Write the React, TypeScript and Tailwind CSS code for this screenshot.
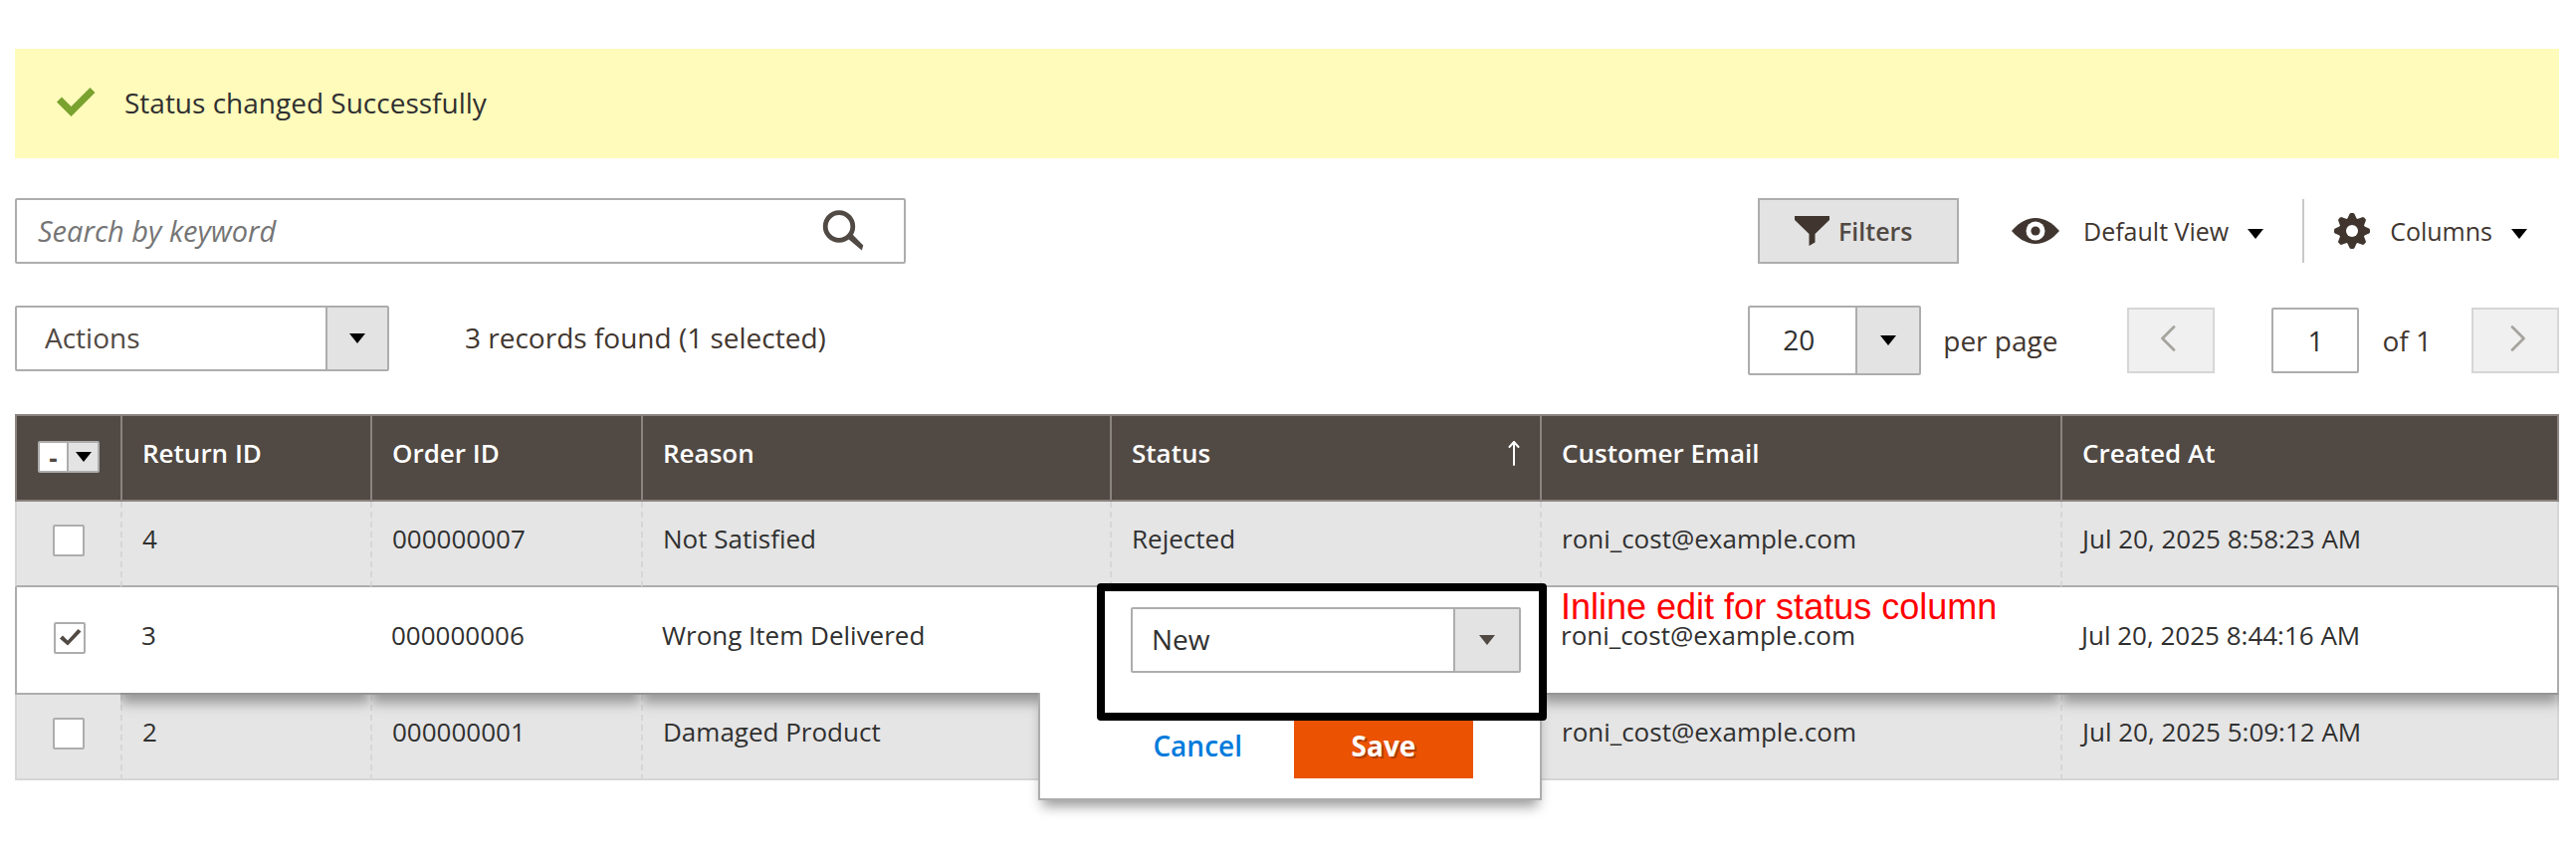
import React, { useState } from 'react';

type ReturnRow = {
  id: string;
  order: string;
  reason: string;
  status?: string;
  email: string;
  created: string;
  selected?: boolean;
};

const rows: ReturnRow[] = [
  { id: '4', order: '000000007', reason: 'Not Satisfied', status: 'Rejected', email: 'roni_cost@example.com', created: 'Jul 20, 2025 8:58:23 AM' },
  { id: '3', order: '000000006', reason: 'Wrong Item Delivered', status: 'New', email: 'roni_cost@example.com', created: 'Jul 20, 2025 8:44:16 AM', selected: true },
  { id: '2', order: '000000001', reason: 'Damaged Product', email: 'roni_cost@example.com', created: 'Jul 20, 2025 5:09:12 AM' },
];

function Caret({ className = 'text-black' }: { className?: string }) {
  return (
    <svg aria-hidden="true" width="16" height="10" viewBox="0 0 16 10" className={`shrink-0 ${className}`}>
      <path d="M0 0h16L8 10z" fill="currentColor" />
    </svg>
  );
}

function CheckIcon() {
  return (
    <svg aria-hidden="true" width="40" height="30" viewBox="0 0 40 30" className="shrink-0 text-[#79a22e]">
      <path d="M1 14.500l5-5L15.500 19 34.500 0 39.500 5 15.500 29z" fill="currentColor" />
    </svg>
  );
}

function SearchIcon() {
  return (
    <svg aria-hidden="true" width="42" height="42" viewBox="0 0 42 42" className="text-[#514943]">
      <circle cx="17" cy="16.500" r="13.800" fill="none" stroke="currentColor" strokeWidth="4.800" />
      <path d="M25.500 28.500l4.500-4.500L41.300 35.500 39.800 40.500z" fill="currentColor" />
    </svg>
  );
}

function FunnelIcon() {
  return (
    <svg aria-hidden="true" width="36" height="30" viewBox="0 0 36 30" className="shrink-0 text-[#41362f]">
      <path d="M0 0h35v4L20.500 18v8.500L14.500 30V18L0 4z" fill="currentColor" />
    </svg>
  );
}

function EyeIcon() {
  return (
    <svg aria-hidden="true" width="48" height="26" viewBox="0 0 48 26" className="shrink-0 text-[#41362f]">
      <path d="M0 13C7 5 15 0 24 0s17 5 24 13c-7 8-15 13-24 13S7 21 0 13z" fill="currentColor" />
      <circle cx="24" cy="13" r="9.500" fill="#fff" />
      <circle cx="24" cy="13" r="4.600" fill="currentColor" />
    </svg>
  );
}

function GearIcon() {
  return (
    <svg aria-hidden="true" width="36" height="36" viewBox="0 0 36 36" className="shrink-0 text-[#41362f]">
      <g fill="currentColor">
        <circle cx="18" cy="18" r="13.200" />
        {[0, 45, 90, 135, 180, 225, 270, 315].map((angle) => (
          <path key={angle} d="M13 6.500L15.500 1Q16 0 17 0h2Q20 0 20.500 1L23 6.500z" transform={`rotate(${angle} 18 18)`} />
        ))}
      </g>
      <circle cx="18" cy="18" r="6" fill="#fff" />
    </svg>
  );
}

function Chevron({ flip = false }: { flip?: boolean }) {
  return (
    <svg aria-hidden="true" width="16" height="26" viewBox="0 0 16 26" className={flip ? 'rotate-180' : ''}>
      <path d="M14 1.500L2.500 13 14 24.500" fill="none" stroke="#a6a49e" strokeWidth="2.800" strokeLinecap="round" strokeLinejoin="round" />
    </svg>
  );
}

type PickerProps = {
  label: string;
  options: string[];
  className: string;
  selectClassName: string;
  arrowClassName: string;
  caretClassName?: string;
};

function Picker({ label, options, className, selectClassName, arrowClassName, caretClassName }: PickerProps) {
  return (
    <div className={`relative flex rounded-xs border-2 border-[#adadad] bg-white ${className}`}>
      <select aria-label={label} className={`w-full appearance-none bg-transparent pb-[2px] text-[28px] outline-none ${selectClassName}`}>
        {options.map((option) => (
          <option key={option}>{option}</option>
        ))}
      </select>
      <span className={`pointer-events-none absolute inset-y-0 right-0 flex items-center justify-center border-l-2 border-[#adadad] bg-[#e3e3e3] ${arrowClassName}`}>
        <Caret className={caretClassName} />
      </span>
    </div>
  );
}

function RowCheckbox({ id, initial }: { id: string; initial: boolean }) {
  const [checked, setChecked] = useState(initial);
  return (
    <label className="relative block size-8">
      <input
        type="checkbox"
        aria-label={`Select return ${id}`}
        checked={checked}
        onChange={() => setChecked(!checked)}
        className="block size-8 appearance-none rounded-xs border-2 border-[#adadad] bg-white"
      />
      {checked && (
        <svg aria-hidden="true" viewBox="0 0 32 32" className="pointer-events-none absolute inset-0 size-8 text-[#514943]">
          <path d="M6 16.500l3-3 5 5L24.500 7l3 2.500L14 23.500z" fill="currentColor" />
        </svg>
      )}
    </label>
  );
}

function StatusEditor() {
  return (
    <>
      <Picker
        label="Status"
        options={['New', 'Pending', 'Approved', 'Rejected']}
        className="h-[66px]"
        selectClassName="pl-[19px] text-[#303030]"
        arrowClassName="w-[66px]"
        caretClassName="text-[#514943]"
      />
      <div className="absolute top-full -right-[2px] z-10 -mt-[2px] flex w-[506px] items-center border-2 border-t-0 border-[#adadad] bg-white py-5 pr-[67px] shadow-[0_10px_12px_-4px_rgba(0,0,0,0.4)]">
        <button type="button" className="ml-auto px-2 text-[28px] leading-[38px] font-semibold text-[#007bdb]">Cancel</button>
        <button type="button" className="ml-[44px] h-[66px] w-[180px] bg-[#eb5202] text-[28px] leading-[38px] font-bold text-white [text-shadow:2px_2px_0_rgba(0,0,0,0.25)]">
          Save
        </button>
      </div>
      <div className="pointer-events-none absolute -top-1 -right-[7px] -left-[13px] z-20 h-[138px] rounded border-8 border-black" />
    </>
  );
}

const thClass = 'h-[88px] border-y-2 border-l-2 border-[#8a837f] bg-[#514943] pt-[19px] pl-5 text-left align-top font-semibold text-white last:border-r-2';
const plainCell = 'h-[86px] border-b-2 border-l-2 border-b-[#d6d6d6] border-l-[#d6d6d6] [border-left-style:dashed] bg-[#e5e5e5] pt-[19px] pl-5 align-top last:border-r-2 last:border-r-[#d6d6d6]';
const editCell = 'relative h-[108px] border-b-2 border-b-[#959595] bg-white pt-[30px] pl-[21px] align-top shadow-[0_8px_12px_0_rgba(0,0,0,0.35)] [clip-path:inset(0_0_-30px_0)] last:border-r-2 last:border-r-[#adadad]';

function GridRow({ row, beforeEdited }: { row: ReturnRow; beforeEdited: boolean }) {
  if (row.selected) {
    return (
      <tr className="relative z-10">
        <td className="h-[108px] border-b-2 border-l-2 border-[#adadad] bg-white pt-[35px] pl-[37px] align-top">
          <RowCheckbox id={row.id} initial />
        </td>
        <td className={editCell}>{row.id}</td>
        <td className={editCell}>{row.order}</td>
        <td className={editCell}>{row.reason}</td>
        <td className="relative z-10 h-[108px] bg-white py-5 pr-[19px] pl-[21px] align-top">
          <StatusEditor />
        </td>
        <td className={editCell}>
          <span className="absolute top-0 left-[21px] font-['Liberation_Sans',Arial,sans-serif] text-[36px] leading-[40px] whitespace-nowrap text-[#ff0000]">
            Inline edit for status column
          </span>
          <span className="relative">{row.email}</span>
        </td>
        <td className={editCell}>{row.created}</td>
      </tr>
    );
  }
  const cell = beforeEdited ? `${plainCell} border-b-[#adadad]!` : plainCell;
  return (
    <tr>
      <td className={`h-[86px] border-b-2 border-l-2 border-[#d6d6d6] bg-[#e5e5e5] pt-[23px] pl-[36px] align-top ${beforeEdited ? 'border-b-[#adadad]!' : ''}`}>
        <RowCheckbox id={row.id} initial={false} />
      </td>
      <td className={cell}>{row.id}</td>
      <td className={cell}>{row.order}</td>
      <td className={cell}>{row.reason}</td>
      <td className={cell}>{row.status}</td>
      <td className={cell}>{row.email}</td>
      <td className={cell}>{row.created}</td>
    </tr>
  );
}

export default function App() {
  return (
    <main className="min-h-screen bg-white pt-[49px] pr-[17px] pb-[58px] pl-[15px] font-['Open_Sans','Noto_Sans',sans-serif] text-[28px] leading-[38px] text-[#41362f]">
      <div role="status" className="flex items-center gap-[29px] bg-[#fffbbb] pt-[35px] pb-[37px] pl-[41px] text-[#303030]">
        <CheckIcon />
        <p>Status changed Successfully</p>
      </div>

      <div className="mt-10 flex items-start justify-between">
        <form className="flex h-[66px] w-[895px] items-center rounded-xs border-2 border-[#adadad] bg-white pr-10" onSubmit={(event) => event.preventDefault()}>
          <input
            type="search"
            aria-label="Search by keyword"
            placeholder="Search by keyword"
            className="h-full min-w-0 flex-1 bg-transparent pb-[2px] pl-[21px] text-[29px] outline-none placeholder:text-[#757575] placeholder:italic"
          />
          <button type="submit" aria-label="Search">
            <SearchIcon />
          </button>
        </form>

        <div className="flex items-center pr-8 text-[25px]">
          <button type="button" className="flex h-[66px] w-[202px] items-center gap-2 border-2 border-[#adadad] bg-[#e3e3e3] pl-[35px] font-semibold text-[#514943]">
            <FunnelIcon />
            Filters
          </button>
          <button type="button" className="ml-[53px] flex items-center">
            <EyeIcon />
            <span className="ml-6">Default View</span>
            <span className="mt-[5px] ml-[19px]"><Caret /></span>
          </button>
          <span className="ml-[39px] h-16 w-[2px] bg-[#c8c8c8]" />
          <button type="button" className="ml-[30px] flex items-center">
            <GearIcon />
            <span className="ml-5">Columns</span>
            <span className="mt-[5px] ml-[19px]"><Caret /></span>
          </button>
        </div>
      </div>

      <div className="mt-[42px] flex items-start justify-between">
        <div className="flex items-center">
          <Picker
            label="Actions"
            options={['Actions', 'Delete', 'Change status']}
            className="h-[66px] w-[376px]"
            selectClassName="pl-7 text-[#514943]"
            arrowClassName="w-[62px]"
          />
          <p className="ml-[76px] pb-[3px]">3 records found (1 selected)</p>
        </div>

        <div className="flex items-center">
          <Picker
            label="Rows per page"
            options={['20', '30', '50', '100', '200']}
            className="h-[70px] w-[174px]"
            selectClassName="pl-[33px] text-[#303030]"
            arrowClassName="w-[64px]"
          />
          <span className="ml-[22px]">per page</span>
          <button type="button" aria-label="Previous page" disabled className="ml-[70px] flex h-[66px] w-[88px] items-center justify-center border-2 border-[#d6d6d6] bg-[#f0f0f0] pr-[6px] pb-1">
            <Chevron />
          </button>
          <input aria-label="Page" defaultValue="1" className="ml-[57px] h-[66px] w-[88px] rounded-xs border-2 border-[#adadad] bg-white text-center text-[28px] text-[#303030] outline-none" />
          <span className="ml-[23px]">of 1</span>
          <button type="button" aria-label="Next page" disabled className="ml-10 flex h-[66px] w-[88px] items-center justify-center border-2 border-[#d6d6d6] bg-[#f0f0f0] pb-1 pl-[6px]">
            <Chevron flip />
          </button>
        </div>
      </div>

      <table className="mt-[39px] w-full table-fixed border-separate border-spacing-0 text-[26px] leading-9 text-[#303030]">
        <colgroup>
          <col className="w-[106px]" />
          <col className="w-[251px]" />
          <col className="w-[272px]" />
          <col className="w-[471px]" />
          <col className="w-[432px]" />
          <col className="w-[523px]" />
          <col />
        </colgroup>
        <thead>
          <tr>
            <th className="h-[88px] border-y-2 border-l-2 border-[#8a837f] bg-[#514943] pt-[25px] pl-[21px] align-top">
              <button type="button" aria-label="Select rows" className="flex h-8 w-[62px] rounded-xs border-2 border-[#adadad] bg-white text-[26px] leading-[30px] font-bold text-[#514943]">
                <span className="flex-1">-</span>
                <span className="flex h-full w-[31px] items-center justify-center border-l-2 border-[#adadad] bg-[#e3e3e3]">
                  <Caret />
                </span>
              </button>
            </th>
            <th className={thClass}>Return ID</th>
            <th className={thClass}>Order ID</th>
            <th className={thClass}>Reason</th>
            <th className={thClass} aria-sort="ascending">
              <span className="flex items-start justify-between pr-5">
                Status
                <svg aria-hidden="true" width="12" height="26" viewBox="0 0 12 26" className="mt-[5px]">
                  <path d="M6 25V2M1.500 7L6 2l4.500 5" fill="none" stroke="#fff" strokeWidth="2" strokeLinecap="round" strokeLinejoin="round" />
                </svg>
              </span>
            </th>
            <th className={thClass}>Customer Email</th>
            <th className={thClass}>Created At</th>
          </tr>
        </thead>
        <tbody>
          {rows.map((row, index) => (
            <GridRow key={row.id} row={row} beforeEdited={Boolean(rows[index + 1]?.selected)} />
          ))}
        </tbody>
      </table>
    </main>
  );
}
